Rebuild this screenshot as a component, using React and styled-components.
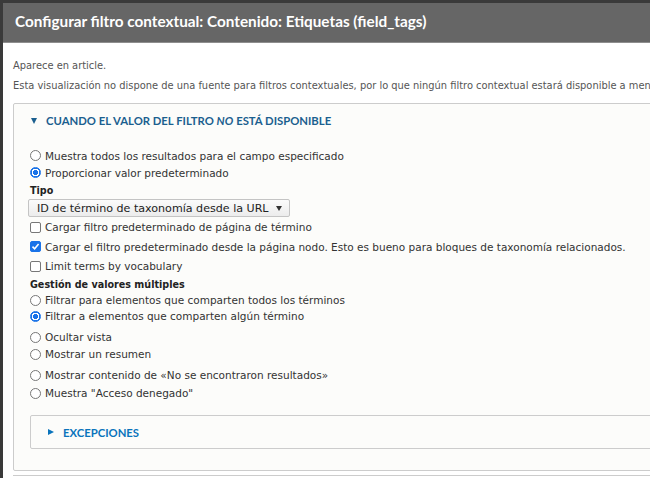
import React from "react";
import styled, { createGlobalStyle } from "styled-components";

const GlobalStyle = createGlobalStyle`
  html, body { margin: 0; padding: 0; }
  body {
    background: #3a3a3a;
    font-family: "DejaVu Sans", Verdana, sans-serif;
    color: #333;
    overflow: hidden;
    height: 478px;
  }
`;

const Dialog = styled.div`
  margin: 3px 0 0 3px;
  width: 720px;
  height: 475px;
  background: #fff;
  display: flex;
  flex-direction: column;
  overflow: hidden;
`;

const TitleBar = styled.div`
  flex: none;
  height: 40px;
  box-sizing: border-box;
  background: #666;
  border-bottom: 1px solid #8e8e8e;
  display: flex;
  align-items: center;
  padding: 0 0 3px 12px;
`;

const Title = styled.h1`
  margin: 0;
  font-family: Lato, "Open Sans", sans-serif;
  font-weight: 700;
  font-size: 15.3px;
  color: #fff;
  white-space: nowrap;
`;

const Content = styled.div`
  padding: 16px 10px 0 10px;
  flex: 1;
`;

const Description = styled.p`
  margin: 0 0 7px;
  font-size: 9.9px;
  line-height: 13px;
  color: #555;
  white-space: nowrap;
`;

const Fieldset = styled.div`
  margin-top: 11px;
  border: 1px solid #ccc;
  border-radius: 2px;
  background: #fcfcfa;
  padding-bottom: 21px;
`;

const Summary = styled.div`
  height: 33px;
  display: flex;
  align-items: center;
  padding-left: ${(p) => p.$pad}px;
  font-family: Lato, "Open Sans", sans-serif;
  font-weight: 700;
  font-size: 11.3px;
  text-transform: uppercase;
  color: ${(p) => p.$color};
  white-space: nowrap;
  em { font-style: italic; margin-right: 3px; }
`;

const Arrow = styled.span`
  display: inline-block;
  width: 0;
  height: 0;
  margin-right: 9px;
  ${(p) =>
    p.$open
      ? `border-left: 3px solid transparent; border-right: 3px solid transparent; border-top: 6px solid currentColor;`
      : `border-top: 3.5px solid transparent; border-bottom: 3.5px solid transparent; border-left: 6px solid currentColor;`}
`;

const Body = styled.div`
  padding: 10px 0 0 16px;
  display: flex;
  flex-direction: column;
`;

const OptionRow = styled.label`
  display: flex;
  align-items: center;
  height: ${(p) => p.$h || 17}px;
  margin-top: ${(p) => p.$mt || 0}px;
  font-size: 10.5px;
  color: #333;
  white-space: nowrap;
`;

const Radio = styled.span`
  flex: none;
  box-sizing: border-box;
  width: 11px;
  height: 11px;
  border-radius: 50%;
  margin-right: 4px;
  border: 1px solid ${(p) => (p.$checked ? "#1a73e8" : "#777")};
  background: ${(p) =>
    p.$checked
      ? "radial-gradient(circle, #1a73e8 0 2.6px, #fff 2.8px 3.6px, #1a73e8 3.8px)"
      : "#fff"};
`;

const Check = styled.span`
  flex: none;
  box-sizing: border-box;
  width: 11px;
  height: 11px;
  border-radius: 2px;
  margin-right: 4px;
  border: 1px solid ${(p) => (p.$checked ? "#1a73e8" : "#777")};
  background: ${(p) => (p.$checked ? "#1a73e8" : "#fff")};
  display: flex;
  align-items: center;
  justify-content: center;
`;

const FieldLabel = styled.div`
  height: ${(p) => p.$h}px;
  display: flex;
  align-items: center;
  font-size: 9.6px;
  font-weight: 700;
  color: #222;
  white-space: nowrap;
`;

const Select = styled.div`
  box-sizing: border-box;
  width: 262px;
  height: 18px;
  margin-left: -2px;
  border: 1px solid #c4c4c4;
  border-radius: 2px;
  background: linear-gradient(#fbfbfb, #ececec);
  display: flex;
  align-items: center;
  padding-left: 8px;
  font-size: 11.1px;
  color: #222;
  white-space: nowrap;
`;

const Caret = styled.span`
  display: inline-block;
  margin-left: 7px;
  border-left: 3.5px solid transparent;
  border-right: 3.5px solid transparent;
  border-top: 5px solid #333;
`;

const Inner = styled.div`
  margin-top: 13px;
  box-sizing: border-box;
  height: 34px;
  border: 1px solid #ccc;
  border-radius: 2px;
  background: #fcfcfa;
  display: flex;
  align-items: center;
`;

const ButtonPane = styled.div`
  margin-top: 4px;
  border-top: 1px solid #ccc;
`;

const CheckMark = () => (
  <svg width="9" height="9" viewBox="0 0 9 9">
    <path d="M1.5 4.6 L3.6 6.7 L7.6 2" fill="none" stroke="#fff" strokeWidth="1.6" />
  </svg>
);

const RadioOpt = ({ checked, children, h, mt }) => (
  <OptionRow $h={h} $mt={mt}>
    <Radio $checked={checked} />
    {children}
  </OptionRow>
);

const CheckOpt = ({ checked, children, h, mt }) => (
  <OptionRow $h={h} $mt={mt}>
    <Check $checked={checked}>{checked && <CheckMark />}</Check>
    {children}
  </OptionRow>
);

export default function App() {
  return (
    <>
      <GlobalStyle />
      <Dialog>
        <TitleBar>
          <Title>Configurar filtro contextual: Contenido: Etiquetas (field_tags)</Title>
        </TitleBar>
        <Content>
          <Description>Aparece en article.</Description>
          <Description>
            Esta visualización no dispone de una fuente para filtros contextuales, por lo que ningún filtro contextual estará disponible a menos que se proporcione uno.
          </Description>
          <Fieldset>
            <Summary $pad={17} $color="#1b5f8f">
              <Arrow $open />
              Cuando el valor del filtro&nbsp;<em>no</em>está disponible
            </Summary>
            <Body>
              <RadioOpt>Muestra todos los resultados para el campo especificado</RadioOpt>
              <RadioOpt checked>Proporcionar valor predeterminado</RadioOpt>
              <FieldLabel $h={18}>Tipo</FieldLabel>
              <Select>
                ID de término de taxonomía desde la URL
                <Caret />
              </Select>
              <CheckOpt h={20}>Cargar filtro predeterminado de página de término</CheckOpt>
              <CheckOpt checked h={19}>
                Cargar el filtro predeterminado desde la página nodo. Esto es bueno para bloques de taxonomía relacionados.
              </CheckOpt>
              <CheckOpt h={20}>Limit terms by vocabulary</CheckOpt>
              <FieldLabel $h={16}>Gestión de valores múltiples</FieldLabel>
              <RadioOpt h={16}>Filtrar para elementos que comparten todos los términos</RadioOpt>
              <RadioOpt h={16} checked>Filtrar a elementos que comparten algún término</RadioOpt>
              <RadioOpt h={18} mt={4}>Ocultar vista</RadioOpt>
              <RadioOpt h={16}>Mostrar un resumen</RadioOpt>
              <RadioOpt h={18} mt={4}>Mostrar contenido de «No se encontraron resultados»</RadioOpt>
              <RadioOpt h={18}>Muestra "Acceso denegado"</RadioOpt>
              <Inner>
                <Summary $pad={17} $color="#0a74bc">
                  <Arrow />
                  Excepciones
                </Summary>
              </Inner>
            </Body>
          </Fieldset>
          <ButtonPane />
        </Content>
      </Dialog>
    </>
  );
}
